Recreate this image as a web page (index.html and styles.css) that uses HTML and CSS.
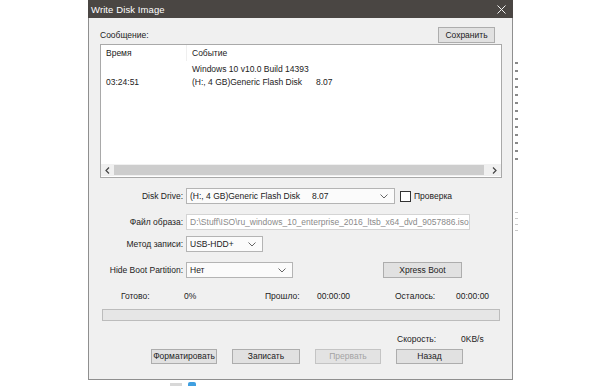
FILE: index.html
```html
<!DOCTYPE html>
<html lang="ru">
<head>
  <meta charset="UTF-8">
  <title>Write Disk Image</title>
  <link rel="stylesheet" href="styles.css">
</head>
<body>

  <div class="desktop">
    <div class="screen">
      <!-- окно записи -->
      <div class="window">
        <div class="titlebar">
          <span class="title">Write Disk Image</span>
          <svg class="close" width="9" height="9" viewBox="0 0 9 9"><path d="M0.5 0.5 L8.5 8.5 M8.5 0.5 L0.5 8.5" stroke="#f2f2f2" stroke-width="1"/></svg>
        </div>

        <div class="body">
          <!-- сообщения -->
          <div class="msg_head">
            <span>Сообщение:</span>
            <button class="btn btn_save">Сохранить</button>
          </div>

          <div class="log">
            <div class="log_head">
              <div class="col_time">Время</div>
              <div class="col_event">Событие</div>
            </div>
            <div class="log_rows">
              <div class="log_row">
                <div class="col_time"></div>
                <div class="col_event">Windows 10 v10.0 Build 14393</div>
              </div>
              <div class="log_row">
                <div class="col_time">03:24:51</div>
                <div class="col_event"><span class="disk_name">(H:, 4 GB)Generic Flash Disk</span>8.07</div>
              </div>
            </div>
            <div class="hscroll">
              <div class="arrow"><svg width="5" height="7" viewBox="0 0 5 7"><path d="M4 0.5 L1 3.5 L4 6.5" fill="none" stroke="#444" stroke-width="1.2"/></svg></div>
              <div class="thumb"></div>
              <div class="arrow"><svg width="5" height="7" viewBox="0 0 5 7"><path d="M1 0.5 L4 3.5 L1 6.5" fill="none" stroke="#444" stroke-width="1.2"/></svg></div>
            </div>
          </div>

          <!-- параметры -->
          <div class="form_row row_drive">
            <label>Disk Drive:</label>
            <div class="select sel_drive"><span><span class="drive_name">(H:, 4 GB)Generic Flash Disk</span>8.07</span><svg width="8" height="5" viewBox="0 0 8 5"><path d="M0.5 0.5 L4 4 L7.5 0.5" fill="none" stroke="#666"/></svg></div>
            <span class="check"></span>
            <span class="check_label">Проверка</span>
          </div>

          <div class="form_row row_file">
            <label>Файл образа:</label>
            <div class="input">D:\Stuff\ISO\ru_windows_10_enterprise_2016_ltsb_x64_dvd_9057886.iso</div>
          </div>

          <div class="form_row row_method">
            <label>Метод записи:</label>
            <div class="select sel_method"><span>USB-HDD+</span><svg width="8" height="5" viewBox="0 0 8 5"><path d="M0.5 0.5 L4 4 L7.5 0.5" fill="none" stroke="#666"/></svg></div>
          </div>

          <div class="form_row row_hide">
            <label>Hide Boot Partition:</label>
            <div class="select sel_hide"><span>Нет</span><svg width="8" height="5" viewBox="0 0 8 5"><path d="M0.5 0.5 L4 4 L7.5 0.5" fill="none" stroke="#666"/></svg></div>
            <button class="btn btn_xpress">Xpress Boot</button>
          </div>

          <!-- прогресс -->
          <div class="stats">
            <span>Готово:</span>
            <span>0%</span>
            <span>Прошло:</span>
            <span>00:00:00</span>
            <span>Осталось:</span>
            <span>00:00:00</span>
          </div>

          <div class="progress"></div>

          <div class="speed">
            <span>Скорость:</span>
            <span>0KB/s</span>
          </div>

          <div class="actions">
            <button class="btn btn_format">Форматировать</button>
            <button class="btn btn_write">Записать</button>
            <button class="btn btn_abort" disabled>Прервать</button>
            <button class="btn btn_back">Назад</button>
          </div>
        </div>
      </div>

      <!-- край окна за диалогом -->
      <div class="side">
        <span class="side_marks"></span>
        <span class="side_marks low"></span>
      </div>
    </div>

    <div class="under">
      <span class="under_grey"></span>
      <span class="under_blue"></span>
    </div>
  </div>

</body>
</html>
```

FILE: styles.css
```css
:root {
    --ui-font: "Liberation Sans", Arial, sans-serif;
    --txt: #222;
    --face: #f0f0f0;
    --btn: #e1e1e1;
    --btn-line: #adadad;
}

* {box-sizing: border-box;}
body {margin: 0; background: #fff; font-family: var(--ui-font); font-size: 8.5px; color: var(--txt); overflow: hidden;}

/* окно */
.desktop {padding-left: 88px; width: 600px; height: 386px;}
.screen {display: flex;}
.window {width: 425px; height: 380px; background: var(--face); border: 1px solid #8f8f8f; border-top: 0; display: flex; flex-direction: column;}

.titlebar {height: 18px; background: #4a4643; color: #fff; display: flex; align-items: center; justify-content: space-between; padding: 0 7px 0 3px; margin: 0 -1px;}
.title {font-size: 9.5px; letter-spacing: 0.1px;}
.close {display: block;}

.body {padding: 0 10px 0 11px; display: flex; flex-direction: column;}

/* кнопки */
.btn {font-family: var(--ui-font); font-size: 8.5px; color: var(--txt); background: var(--btn); border: 1px solid var(--btn-line); height: 15px; padding: 0; line-height: 13px; white-space: nowrap; overflow: hidden;}
.btn:disabled {color: #a3a3a3; background: #e3e3e3; border-color: #c4c4c4;}

/* сообщения */
.msg_head {margin-top: 9px; height: 16px; display: flex; align-items: center; justify-content: space-between;}
.btn_save {width: 57px; height: 16px; margin-right: 7px;}

.log {margin-top: 1px; height: 134px; background: #fff; border: 1px solid #a9a9a9; display: flex; flex-direction: column;}
.log_head {height: 16px; display: flex; align-items: center;}
.log_head .col_time {border-right: 1px solid #efefef; height: 100%; line-height: 16px;}
.log_rows {flex: 1; padding-top: 2px;}
.log_row {display: flex; line-height: 13px;}
.col_time {width: 86px; padding-left: 5px;}
.col_event {padding-left: 5px;}
.disk_name {display: inline-block; width: 124px;}

.hscroll {height: 12px; margin-bottom: 1px; background: #f0f0f0; display: flex; align-items: center;}
.hscroll .arrow {width: 13px; display: flex; justify-content: center;}
.hscroll .thumb {flex: 1; height: 10px; margin: 0 4px 0 0; background: #cdcdcd;}

/* параметры */
.form_row {display: flex; align-items: center; height: 16px;}
.form_row label {width: 83px; margin-right: 3px; text-align: right; white-space: nowrap;}
.row_drive {margin-top: 10px;}
.row_file {margin-top: 10px;}
.row_method {margin-top: 6px;}
.row_hide {margin-top: 10px;}

.select {height: 16px; background: #fbfbfb; border: 1px solid #b4b4b4; display: flex; align-items: center; justify-content: space-between; padding: 0 6px 0 3px;}
.select svg {display: block;}
.sel_drive {width: 209px;}
.drive_name {display: inline-block; width: 122px;}
.sel_method {width: 77px;}
.sel_hide {width: 107px;}

.check {width: 11px; height: 11px; border: 1px solid #333; background: #fff; margin-left: 5px;}
.check_label {margin-left: 3px;}

.input {width: 284px; height: 16px; background: #fff; border: 1px solid #d4d4d4; color: #8a8a8a; line-height: 14px; padding-left: 3px; white-space: nowrap; overflow: hidden;}

.btn_xpress {width: 79px; height: 16px; margin-left: 90px;}

/* прогресс */
.stats {margin-top: 12px; height: 12px; display: grid; grid-template-columns: 63px 81px 52px 78px 61px auto; align-items: center; padding-left: 21px;}
.progress {margin: 7px 2px 0 2px; height: 12px; background: #e6e6e6; border: 1px solid #bcbcbc;}
.speed {margin-top: 12px; height: 12px; display: grid; grid-template-columns: 64px auto; align-items: center; padding-left: 297px;}

.actions {margin-top: 4px; display: flex; gap: 15px; padding-left: 51px;}
.btn_format {width: 66px;}
.btn_write {width: 68px;}
.btn_abort {width: 66px;}
.btn_back {width: 67px;}

/* фон за окном */
.side {display: flex; flex-direction: column; padding-top: 62px; padding-left: 2px; gap: 50px;}
.side_marks {width: 3px; height: 100px; background: repeating-linear-gradient(#8a8a8a 0 2px, transparent 2px 8px);}
.side_marks.low {height: 22px; background: repeating-linear-gradient(#c8c8c8 0 1px, transparent 1px 6px);}

.under {display: flex; align-items: flex-end; gap: 6px; padding-left: 82px; height: 6px;}
.under_grey {width: 12px; height: 3px; background: #d8d8d8;}
.under_blue {width: 8px; height: 4px; background: #3f9fe0; border-radius: 2px 2px 0 0;}
```
